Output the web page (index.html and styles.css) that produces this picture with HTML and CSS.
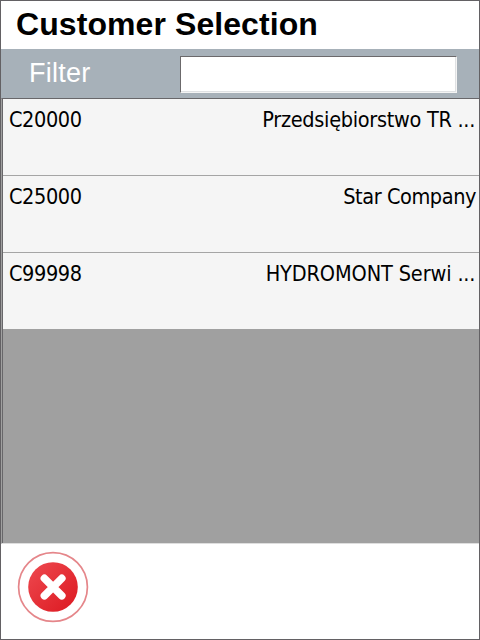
FILE: index.html
```html
<!DOCTYPE html>
<html lang="en">
<head>
<meta charset="utf-8">
<title>Customer Selection</title>
<link rel="stylesheet" href="styles.css">
</head>
<body>
<main class="window">
  <h1 class="title">Customer Selection</h1>
  <div class="filter">
    <label class="filter-label" for="filter">Filter</label>
    <input class="filter-input" id="filter" type="text">
  </div>
  <div class="list">
    <div class="row"><span class="code">C20000</span><span class="name">Przedsiębiorstwo TR <span class="dots">...</span></span></div>
    <div class="row"><span class="code">C25000</span><span class="name name-short">Star Company</span></div>
    <div class="row"><span class="code">C99998</span><span class="name name-caps">HYDROMONT Serwi <span class="dots">...</span></span></div>
  </div>
  <footer class="footer">
    <button class="cancel" aria-label="Cancel">
      <svg width="72" height="72" viewBox="0 0 72 72">
        <defs>
          <linearGradient id="red" x1="0" y1="0" x2="1" y2="1">
            <stop offset="0" stop-color="#ee4a50"/>
            <stop offset="1" stop-color="#dc1820"/>
          </linearGradient>
        </defs>
        <circle cx="36" cy="36" r="34.4" fill="#fff" stroke="#e5868a" stroke-width="1.7"/>
        <circle cx="36" cy="36" r="24.8" fill="url(#red)"/>
        <path d="M27.4 27.4 44.8 44.8M44.8 27.4 27.4 44.8" fill="none" stroke="#fff" stroke-width="7.6" stroke-linecap="round"/>
      </svg>
    </button>
  </footer>
</main>
</body>
</html>
```
FILE: styles.css
```css
* { box-sizing: border-box; }
body { margin: 0; }
.window {
  display: flex;
  flex-direction: column;
  width: 480px;
  height: 640px;
  border: 1px solid #636164;
  background: #fff;
  color: #000;
  font-family: "Liberation Sans", sans-serif;
}
.title {
  margin: 0;
  height: 48px;
  padding-left: 15px;
  font-size: 32px;
  font-weight: 700;
  letter-spacing: 0.08px;
  line-height: 46px;
  white-space: nowrap;
}
.filter {
  display: flex;
  align-items: flex-start;
  justify-content: space-between;
  height: 49px;
  padding: 0 22px 0 28px;
  background: #a7b1b9;
}
.filter-label {
  height: 49px;
  color: #fff;
  font-size: 27px;
  letter-spacing: 0.25px;
  line-height: 49px;
}
.filter-input {
  width: 277px;
  height: 37px;
  margin: 7px 0 0;
  padding: 0 4px;
  border: 1px solid;
  border-color: #6b696b #f4f4f4 #f4f4f4 #6b696b;
  background: #fff;
  box-shadow: inset -1px -1px #dfe1e3;
  font: 24px "Liberation Sans", sans-serif;
  outline: 0;
}
.list {
  height: 446px;
  border-top: 1px solid #68676a;
  border-left: 1px solid #a0a0a0;
  border-bottom: 1px solid #dedede;
  background: #a0a0a0;
  box-shadow: inset 1px 0 #68676a;
}
.row {
  display: flex;
  justify-content: space-between;
  height: 77px;
  margin-left: 1px;
  padding: 7px 4px 0 6px;
  border-bottom: 1px solid #a5a5a5;
  background: #f5f5f5;
  font-family: "DejaVu Sans Condensed", "DejaVu Sans", sans-serif;
  font-stretch: condensed;
  font-size: 21.5px;
  line-height: 27px;
  white-space: nowrap;
}
.row:last-child {
  height: 76px;
  border-bottom: 0;
}
.code { letter-spacing: -0.4px; }
.name { letter-spacing: -0.3px; }
.name-short {
  margin-right: -1px;
  letter-spacing: -0.42px;
}
.name-caps { letter-spacing: -0.12px; }
.dots { letter-spacing: -0.3px; }
.footer {
  flex: 1;
  padding: 7px 16px;
}
.cancel {
  display: block;
  width: 72px;
  height: 72px;
  padding: 0;
  border: 0;
  background: none;
}
.cancel svg { display: block; }
```
